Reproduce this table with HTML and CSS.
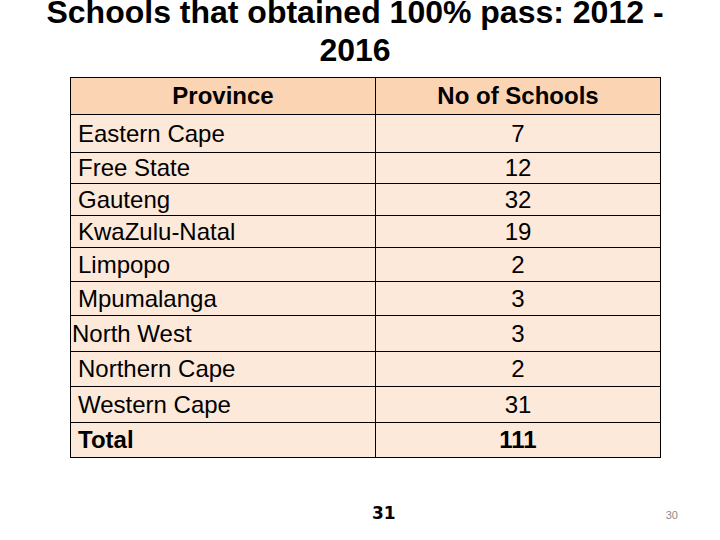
FILE: index.html
```html
<!DOCTYPE html>
<html>
<head>
<meta charset="utf-8">
<link rel="stylesheet" href="styles.css">
</head>
<body>
<div class="slide">
  <h1 class="title">Schools that obtained 100% pass: 2012 - 2016</h1>
  <div class="grid">
    <div class="cell head">Province</div>
    <div class="cell head num">No of Schools</div>
    <div class="cell">Eastern Cape</div><div class="cell num">7</div>
    <div class="cell">Free State</div><div class="cell num">12</div>
    <div class="cell">Gauteng</div><div class="cell num">32</div>
    <div class="cell">KwaZulu-Natal</div><div class="cell num">19</div>
    <div class="cell">Limpopo</div><div class="cell num">2</div>
    <div class="cell">Mpumalanga</div><div class="cell num">3</div>
    <div class="cell tight">North West</div><div class="cell num">3</div>
    <div class="cell">Northern Cape</div><div class="cell num">2</div>
    <div class="cell">Western Cape</div><div class="cell num">31</div>
    <div class="cell bold">Total</div><div class="cell num bold">111</div>
  </div>
  <div class="footer">
    <span class="page">31</span>
    <span class="slideno">30</span>
  </div>
</div>
</body>
</html>
```

FILE: styles.css
```css
html, body {
  margin: 0;
  padding: 0;
  background: #ffffff;
}
.slide {
  width: 720px;
  height: 540px;
  overflow: hidden;
  font-family: "Liberation Sans", Arial, sans-serif;
  color: #000;
}
.title {
  margin: -7px 0 0 0;
  padding: 0 50px 0 40px;
  width: 630px;
  text-align: center;
  font-size: 32px;
  line-height: 38px;
  font-weight: bold;
}
.grid {
  margin: 8px 0 0 70px;
  width: 591px;
  display: grid;
  grid-template-columns: 305px 285px;
  grid-template-rows: 37px 38px 31px 32px 32px 34px 34px 36px 35px 36px 35px;
  border-left: 1px solid #000;
  border-top: 1px solid #000;
  box-sizing: border-box;
  background: #fde9d9;
}
.cell {
  border-right: 1px solid #000;
  border-bottom: 1px solid #000;
  box-sizing: border-box;
  display: flex;
  align-items: center;
  padding-left: 7px;
  font-size: 24px;
  background: #fde9d9;
}
.cell.tight {
  padding-left: 1px;
}
.cell.head {
  background: #fbd4b4;
  font-weight: bold;
  justify-content: center;
  padding-left: 0;
}
.cell.num {
  justify-content: center;
  padding-left: 0;
}
.cell.bold {
  font-weight: bold;
}
.footer {
  display: flex;
  align-items: flex-start;
  margin-top: 45px;
  padding-left: 372px;
  padding-right: 42px;
}
.page {
  font-family: "DejaVu Sans", Verdana, sans-serif;
  font-weight: bold;
  font-size: 17px;
  line-height: 20px;
}
.slideno {
  margin-left: auto;
  margin-top: 6px;
  font-family: "Liberation Sans", Arial, sans-serif;
  font-size: 11px;
  color: #8a8a8a;
}
```
